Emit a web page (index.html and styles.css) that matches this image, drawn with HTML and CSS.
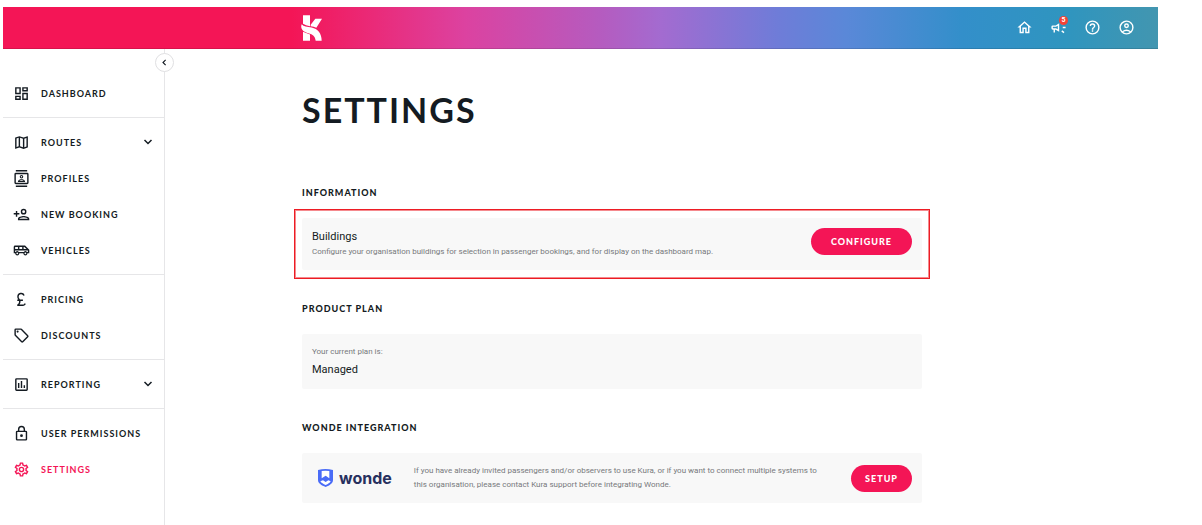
FILE: index.html
```html
<!DOCTYPE html>
<html lang="en">
<head>
  <meta charset="UTF-8" />
  <meta name="viewport" content="width=device-width, initial-scale=1" />
  <title>Kura - Settings</title>
  <link rel="stylesheet" href="styles.css">
</head>
<body>
  <header class="topbar">
    <a class="logo" href="#" aria-label="Kura">
      <svg viewBox="0 0 63 77" width="21" height="26" fill="#fff">
        <path d="M6 0h21v33Q14 31 6 26z" />
        <path d="M29 29 43 11h20L46 38q-7-4-17-5z" />
        <path d="M2 27C8 34 18 35 32 37 50 41 62 54 62 77H44C42 62 36 58 22 54 6 50-3 40 2 27z" />
        <path d="M6 50q8 4 21 8v19H6z" />
      </svg>
    </a>
    <nav class="topbar-actions">
      <a href="#" aria-label="Home">
        <svg class="icon-white" viewBox="0 0 24 24"><path d="m12 5.700 5 4.500V18h-2v-6H9v6H7v-7.800l5-4.500M12 3 2 12h3v8h6v-6h2v6h6v-8h3z" /></svg>
      </a>
      <a class="news" href="#" aria-label="News">
        <svg class="icon-white" viewBox="0 0 24 24"><path d="M18 11v2h4v-2zm-2 6.600 3.200 2.400 1.200-1.600-3.200-2.400zM20.400 5.600 19.200 4 16 6.400l1.200 1.600zM4 9a2 2 0 0 0-2 2v2a2 2 0 0 0 2 2h1v4h2v-4h1l5 3V6L8 9zm5.030 1.710L11 9.530v4.940l-1.970-1.180-.48-.29H4v-2h4.550z" /></svg>
        <span class="badge">5</span>
      </a>
      <a href="#" aria-label="Help">
        <svg class="icon-white" viewBox="0 0 24 24"><path d="M11 18h2v-2h-2zm1-16a10 10 0 1 0 0 20 10 10 0 0 0 0-20m0 18a8 8 0 1 1 0-16 8 8 0 0 1 0 16m0-14a4 4 0 0 0-4 4h2a2 2 0 1 1 4 0c0 2-3 1.750-3 5h2c0-2.250 3-2.500 3-5a4 4 0 0 0-4-4" /></svg>
      </a>
      <a href="#" aria-label="Account">
        <svg class="icon-white" viewBox="0 0 24 24"><path d="M12 2a10 10 0 1 0 0 20 10 10 0 0 0 0-20M7.350 18.500a7.900 7.900 0 0 1 9.300 0 7.900 7.900 0 0 1-9.300 0m10.790-1.380a9.900 9.900 0 0 0-12.280 0A8 8 0 1 1 20 12a8 8 0 0 1-1.860 5.120M12 6a3.500 3.500 0 1 0 0 7 3.500 3.500 0 0 0 0-7m0 5a1.500 1.500 0 1 1 0-3 1.500 1.500 0 0 1 0 3" /></svg>
      </a>
    </nav>
  </header>

  <div class="layout">
    <aside class="sidebar">
      <button class="collapse" type="button" aria-label="Collapse menu">
        <svg viewBox="0 0 24 24" width="9" height="9"><path d="M15 5 8 12l7 7" fill="none" stroke="#141b22" stroke-width="3" /></svg>
      </button>
      <nav>
        <ul class="menu-group">
          <li><a href="#">
            <svg class="icon" viewBox="0 0 24 24"><path d="M19 5v2h-4V5zM9 5v6H5V5zm10 8v6h-4v-6zM9 17v2H5v-2zM21 3h-8v6h8zM11 3H3v10h8zm10 8h-8v10h8zm-10 4H3v6h8z" /></svg>
            Dashboard
          </a></li>
        </ul>
        <ul class="menu-group">
          <li><a href="#">
            <svg class="icon" viewBox="0 0 24 24"><path d="m20.500 3-.16.030L15 5.100 9 3 3.360 4.900a.5.500 0 0 0-.36.480V20.500a.5.500 0 0 0 .66.470L9 18.900l6 2.100 5.640-1.900a.5.500 0 0 0 .36-.480V3.500a.5.500 0 0 0-.5-.5M10 5.470l4 1.400v11.660l-4-1.400zM5 6.460l3-1.010v11.700l-3 1.160zm14 11.080-3 1.010V6.860l3-1.160z" /></svg>
            Routes
            <svg class="chevron" viewBox="0 0 24 24"><path d="m5 8 7 7 7-7" /></svg>
          </a></li>
          <li><a href="#">
            <svg class="icon" viewBox="0 0 24 24"><path d="M20 0H4v2h16zM4 24h16v-2H4zM20 4H4a2 2 0 0 0-2 2v12a2 2 0 0 0 2 2h16a2 2 0 0 0 2-2V6a2 2 0 0 0-2-2m0 14H4V6h16zM12 12a2.500 2.500 0 1 0 0-5 2.500 2.500 0 0 0 0 5m0-3.500a1 1 0 1 1 0 2 1 1 0 0 1 0-2m5 7.490C17 13.900 13.690 13 12 13s-5 .900-5 2.990V17h10zm-8.190-.490c.610-.520 2.030-1 3.190-1s2.590.480 3.200 1z" /></svg>
            Profiles
          </a></li>
          <li><a href="#">
            <svg class="icon" viewBox="0 0 24 24"><path d="M15 12a4 4 0 1 0 0-8 4 4 0 0 0 0 8m0-6a2 2 0 1 1 0 4 2 2 0 0 1 0-4m0 8c-2.670 0-8 1.340-8 4v2h16v-2c0-2.660-5.330-4-8-4m-6 4c.220-.720 3.310-2 6-2 2.700 0 5.800 1.290 6 2zM6 15v-3h3v-2H6V7H4v3H1v2h3v3z" /></svg>
            New booking
          </a></li>
          <li><a href="#">
            <svg class="icon" viewBox="0 0 24 24"><path d="M17 5H3a2 2 0 0 0-2 2v9h2a3 3 0 0 0 6 0h5.500a3 3 0 0 0 6 0H23v-5zm-2 2h1l3 3h-4zM9 7h4v3H9zM3 7h4v3H3zm3 10.250a1.250 1.250 0 1 1 0-2.500 1.250 1.250 0 0 1 0 2.500m11.500 0a1.250 1.250 0 1 1 0-2.500 1.250 1.250 0 0 1 0 2.500M21 14h-1.260a3 3 0 0 0-4.480 0H8.220a3 3 0 0 0-4.440 0H3v-2h18z" /></svg>
            Vehicles
          </a></li>
        </ul>
        <ul class="menu-group">
          <li><a href="#">
            <svg class="icon" viewBox="0 0 24 24"><path d="M14 21c1.930 0 3.620-1.170 4-3l-1.750-.880C16 18.210 15.330 19 14 19H9.100c.830-1 1.500-2.340 1.500-4 0-.350-.030-.690-.080-1H14v-2H9.820C9 10.420 8 9.600 8 8a3.500 3.500 0 0 1 6.720-1.400l1.850-.770A5.500 5.500 0 0 0 6 8c0 1.780.790 2.900 1.490 4H6v2h2.470c.350 2.700-.84 4.050-2.470 5v2z" /></svg>
            Pricing
          </a></li>
          <li><a href="#">
            <svg class="icon" viewBox="0 0 24 24"><path d="m21.410 11.580-9-9A2 2 0 0 0 11 2H4a2 2 0 0 0-2 2v7c0 .550.220 1.050.590 1.420l9 9a2 2 0 0 0 2.820 0l7-7a2 2 0 0 0 0-2.840M13 20.010 4 11V4h7v-.010l9 9zM6.500 5a1.500 1.500 0 1 0 0 3 1.500 1.500 0 0 0 0-3" /></svg>
            Discounts
          </a></li>
        </ul>
        <ul class="menu-group">
          <li><a href="#">
            <svg class="icon" viewBox="0 0 24 24"><path d="M19 3H5a2 2 0 0 0-2 2v14a2 2 0 0 0 2 2h14a2 2 0 0 0 2-2V5a2 2 0 0 0-2-2m0 16H5V5h14zM7 10h2v7H7zm4-3h2v10h-2zm4 6h2v4h-2z" /></svg>
            Reporting
            <svg class="chevron" viewBox="0 0 24 24"><path d="m5 8 7 7 7-7" /></svg>
          </a></li>
        </ul>
        <ul class="menu-group">
          <li><a href="#">
            <svg class="icon" viewBox="0 0 24 24"><path d="M18 8h-1V6A5 5 0 0 0 7 6v2H6a2 2 0 0 0-2 2v10a2 2 0 0 0 2 2h12a2 2 0 0 0 2-2V10a2 2 0 0 0-2-2M9 6a3 3 0 0 1 6 0v2H9zm9 14H6V10h12zm-6-3a2 2 0 1 0 0-4 2 2 0 0 0 0 4" /></svg>
            User permissions
          </a></li>
          <li><a class="active" href="#">
            <svg class="icon" viewBox="0 0 24 24"><path d="M19.430 12.980a7.800 7.800 0 0 0 0-1.960l2.110-1.650a.5.500 0 0 0 .12-.64l-2-3.460a.5.500 0 0 0-.61-.22l-2.490 1a7.300 7.300 0 0 0-1.690-.98l-.38-2.650A.5.500 0 0 0 14 2h-4a.5.500 0 0 0-.49.420l-.38 2.650c-.61.250-1.170.590-1.690.980l-2.490-1a.5.500 0 0 0-.61.220l-2 3.460a.5.500 0 0 0 .12.640l2.110 1.650a7.900 7.900 0 0 0 0 1.960l-2.110 1.650a.5.500 0 0 0-.12.640l2 3.460c.12.220.39.300.61.220l2.490-1c.52.400 1.080.730 1.690.980l.38 2.650c.03.240.24.420.49.420h4c.25 0 .46-.18.490-.42l.38-2.650a7.700 7.700 0 0 0 1.690-.98l2.490 1c.23.090.49 0 .61-.22l2-3.460a.5.500 0 0 0-.12-.64zm-1.980-1.710c.07.530.07.930 0 1.460l-.14 1.130 1.910 1.490-.8 1.400-2.110-.86-.9.700c-.43.320-.84.560-1.250.73l-1.060.43-.32 2.250h-1.560l-.32-2.250-1.060-.43a5.400 5.400 0 0 1-1.230-.71l-.91-.72-2.120.86-.8-1.400 1.910-1.490-.14-1.130a6 6 0 0 1 0-1.460l.14-1.130-1.910-1.490.8-1.400 2.110.86.900-.7c.43-.32.84-.56 1.250-.73l1.060-.43.32-2.250h1.560l.32 2.250 1.060.43c.43.180.83.410 1.230.71l.91.720 2.120-.86.800 1.400-1.910 1.490zM12 8a4 4 0 1 0 0 8 4 4 0 0 0 0-8m0 6a2 2 0 1 1 0-4 2 2 0 0 1 0 4" /></svg>
            Settings
          </a></li>
        </ul>
      </nav>
    </aside>

    <main class="content">
      <h1>Settings</h1>

      <section>
        <h2>Information</h2>
        <div class="highlight">
          <div class="card buildings">
            <div class="card-text">
              <h3>Buildings</h3>
              <p>Configure your organisation buildings for selection in passenger bookings, and for display on the dashboard map.</p>
            </div>
            <button class="btn" type="button">Configure</button>
          </div>
        </div>
      </section>

      <section>
        <h2>Product plan</h2>
        <div class="card plan">
          <div class="card-text">
            <p>Your current plan is:</p>
            <h3>Managed</h3>
          </div>
        </div>
      </section>

      <section>
        <h2>Wonde integration</h2>
        <div class="card wonde">
          <div class="wonde-logo">
            <svg viewBox="0 0 45 54" width="15" height="18">
              <path d="M0 3Q22-3 45 3v30c0 10-10 16-22 21C10 49 0 43 0 33z" fill="#4a6cf7" />
              <path d="M11 6q11-2 23 0v22l-11-8-12 8z" fill="#fff" />
              <path d="m7 37 8-3 8 5 8-5 7 3c-3 5-8 8-15 11C16 45 10 42 7 37z" fill="#fff" />
            </svg>
            <span>wonde</span>
          </div>
          <p>If you have already invited passengers and/or observers to use Kura, or if you want to connect multiple systems to this organisation, please contact Kura support before integrating Wonde.</p>
          <button class="btn btn-small" type="button">Setup</button>
        </div>
      </section>
    </main>
  </div>
</body>
</html>
```
FILE: styles.css
```css
* {
  box-sizing: border-box;
}

body {
  margin: 0;
  padding: 7px 44px 0 3px;
  min-height: 100vh;
  display: flex;
  flex-direction: column;
  font-family: Roboto, Arial, sans-serif;
  font-size: 8px;
  color: #141b22;
  background: #fff;
}

h1, h2, h3, p, ul {
  margin: 0;
  padding: 0;
}

a {
  color: inherit;
  text-decoration: none;
}

/* Top bar */
.topbar {
  display: flex;
  align-items: center;
  justify-content: space-between;
  height: 42px;
  padding: 0 23px 0 298px;
  background: linear-gradient(90deg, #f41556 0%, #f41556 25%, #ea2a78 32%, #dc42a0 40%, #b45cc0 52%, #a36bd0 57%, #6f7cd8 67%, #5a88d8 73%, #338fca 83%, #2f95bf 92%, #4296b0 100%);
  border-bottom: 1px solid rgba(0, 0, 0, 0.12);
}

.logo {
  display: flex;
}

.topbar-actions {
  display: flex;
  align-items: center;
  gap: 17px;
}

.topbar-actions a {
  position: relative;
  display: flex;
}

.icon-white {
  width: 17px;
  height: 17px;
  fill: #fff;
}

.badge {
  position: absolute;
  top: -3px;
  right: -1px;
  width: 9px;
  height: 9px;
  border-radius: 50%;
  background: #f44336;
  color: #fff;
  font-size: 7px;
  font-weight: 700;
  line-height: 9px;
  text-align: center;
}

/* Sidebar */
.layout {
  display: flex;
  flex: 1;
}

.sidebar {
  position: relative;
  flex: 0 0 162px;
  padding-top: 20px;
  border-right: 1px solid #e6e6e8;
}

.collapse {
  position: absolute;
  top: 4px;
  right: -10px;
  display: flex;
  align-items: center;
  justify-content: center;
  width: 19px;
  height: 19px;
  padding: 0;
  border: 1px solid #e0e0e2;
  border-radius: 50%;
  background: #fff;
  cursor: pointer;
}

.menu-group {
  list-style: none;
  padding: 6px 0;
  border-bottom: 1px solid #e6e6e8;
}

.menu-group:last-child {
  border-bottom: none;
}

.menu-group a {
  display: flex;
  align-items: center;
  height: 36px;
  padding: 0 10px;
  font-family: Lato, sans-serif;
  font-size: 9px;
  font-weight: 700;
  letter-spacing: 1px;
  text-transform: uppercase;
}

.menu-group a.active {
  color: #f41556;
}

.icon {
  width: 17px;
  height: 17px;
  margin-right: 11px;
  fill: currentColor;
}

.chevron {
  width: 12px;
  height: 12px;
  margin-left: auto;
  fill: none;
  stroke: currentColor;
  stroke-width: 3;
}

/* Page content */
.content {
  flex: 1;
  padding: 40px 236px 21px 137px;
}

h1 {
  margin-bottom: 54px;
  font-family: Lato, sans-serif;
  font-size: 34px;
  font-weight: 700;
  line-height: 42px;
  letter-spacing: 2px;
  text-transform: uppercase;
}

section + section {
  margin-top: 31px;
}

h2 {
  margin-bottom: 17px;
  font-family: Lato, sans-serif;
  font-size: 9px;
  font-weight: 900;
  line-height: 16px;
  letter-spacing: 1px;
  text-transform: uppercase;
}

h3 {
  font-size: 11px;
  font-weight: 400;
  line-height: 16px;
}

p {
  color: #77797c;
  line-height: 14px;
}

.highlight {
  margin: -9px -8px;
  padding: 8px 7px;
  border: 1px solid #ed1c24;
  box-shadow: inset 0 0 0 1px #f58a8e;
}

.card {
  display: flex;
  align-items: center;
  justify-content: space-between;
  padding: 10px;
  border-radius: 2px;
  background: #f8f8f8;
}

.card-text {
  padding: 1px 0;
}

.buildings {
  align-items: flex-start;
}

.plan h3 {
  margin-top: 3px;
}

.wonde {
  gap: 22px;
  padding: 11px 10px 11px 16px;
}

.wonde p {
  flex: 1;
}

.wonde-logo {
  display: flex;
  align-items: center;
  gap: 6px;
  font-family: Inter, sans-serif;
  font-size: 16px;
  font-weight: 700;
  line-height: 18px;
  color: #27305e;
}

.btn {
  height: 27px;
  padding: 0 20px;
  border: none;
  border-radius: 14px;
  background: #f41556;
  color: #fff;
  font-family: Lato, sans-serif;
  font-size: 9px;
  font-weight: 900;
  letter-spacing: 1px;
  text-transform: uppercase;
  cursor: pointer;
}

.btn-small {
  padding: 0 14px;
}

.btn:hover {
  background: #d60f49;
}
```
